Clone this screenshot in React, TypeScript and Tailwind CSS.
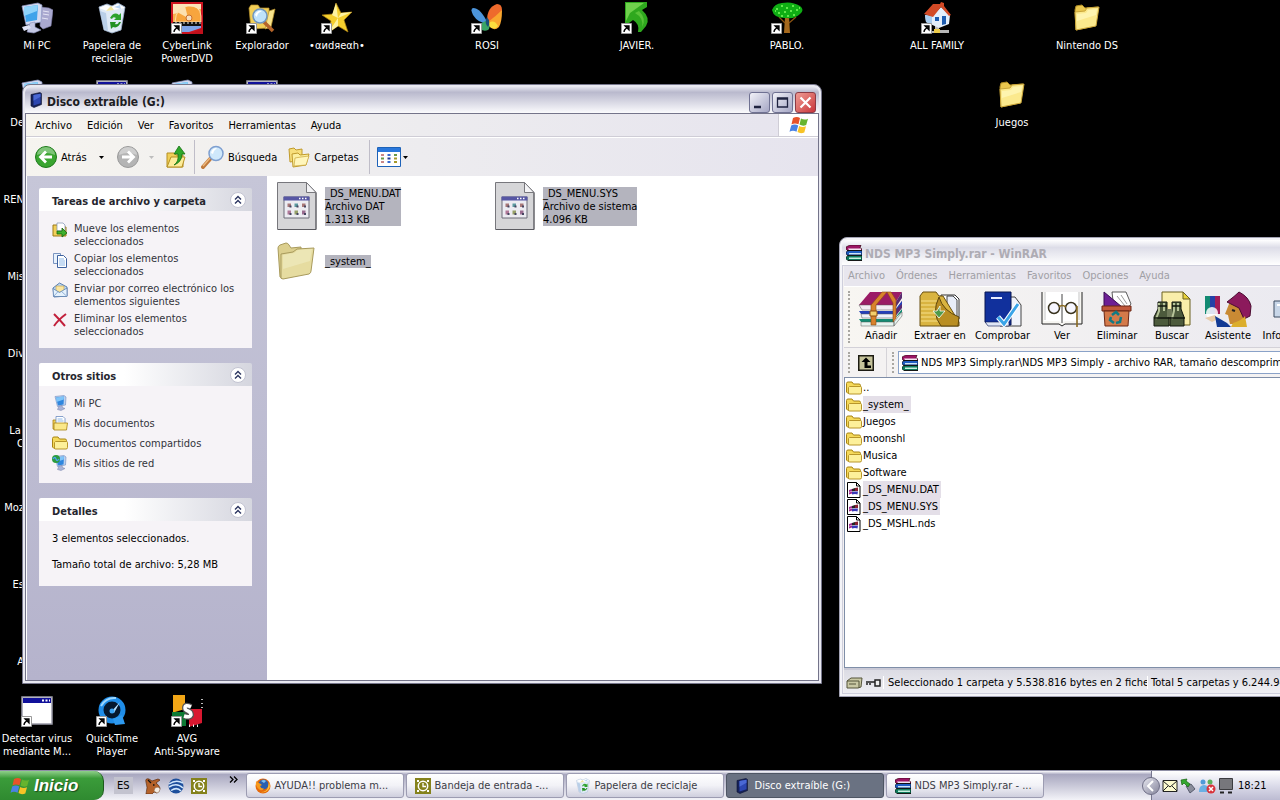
import type { ReactNode } from "react"

type IconProps = { className?: string }

/* ---------- shared icons ---------- */

function Folder({ className = "size-4" }: IconProps) {
  return (
    <svg viewBox="0 0 32 32" className={className}>
      <path d="M4 8 5 4l6-1 3 3 13-1-3 19L5 28z" fill="#e9c64e" stroke="#b08d24" />
      <path d="M4 10l10-1 2-3 12-1-3 19L5 28z" fill="#fbe98d" stroke="#c9a53a" />
      <path d="M6 12l9-1 2-3 9-1-1 6L6 19z" fill="#fff6b8" opacity=".8" />
    </svg>
  )
}

function SmallFolder({ className = "size-4" }: IconProps) {
  return (
    <svg viewBox="0 0 16 16" className={className}>
      <path d="M.500 12V3.500q0-1.500 1.500-1.500H6l1.500 2H13q1.500 0 1.500 1.500V13.500H2z" fill="#f5d95a" stroke="#a88413" />
      <path d="M3.500 6.500h11q1 0 1 1v5q0 1.500-1.500 1.500H3.500q-1 0-1-1V7.500z" fill="#fdf09a" stroke="#b8962a" />
    </svg>
  )
}

function Books({ className = "size-4" }: IconProps) {
  return (
    <svg viewBox="0 0 16 16" className={className}>
      <path d="M0 2 4 0h11l-1 3 2 1v2H2L0 4z" fill="#9b1464" stroke="#200" strokeWidth=".6" />
      <path d="M2 3.500h13v1.500H3z" fill="#f4e3ef" />
      <path d="M0 7l3-1.500h13v5H2L0 9z" fill="#1f5fc4" stroke="#001" strokeWidth=".6" />
      <path d="M3 8h12v1.500H3z" fill="#cfe4f6" />
      <path d="M0 12l3-1.500h13v5H2L0 14z" fill="#0e7a5c" stroke="#010" strokeWidth=".6" />
      <path d="M3 12.500h12V14H3z" fill="#c9f0e0" />
      <path d="M1 5.500h15M1 10.300h15M2 15.500h14" stroke="#111" strokeWidth=".9" />
    </svg>
  )
}

function Drive({ className = "size-4" }: IconProps) {
  return (
    <svg viewBox="0 0 16 16" className={className}>
      <path d="M2 2.500l9-2 1.500 1v11L5 15.500 2 14z" fill="#16225a" stroke="#0b1030" strokeWidth=".6" />
      <path d="M4.500 3l7-1.300v9.500l-7 2.300z" fill="#2c46b0" />
      <path d="M4.500 3l7-1.300v3l-7 4z" fill="#4a68d4" />
    </svg>
  )
}

function Bin({ className = "size-4" }: IconProps) {
  return (
    <svg viewBox="0 0 32 32" className={className}>
      <path d="M3 5l8-3 5 2 6-3 7 4-4 23-9 3-8-3z" fill="#dfeaf6" stroke="#9fb4cf" strokeWidth=".8" />
      <path d="M3 6l8 3 18-3-7-4-7 3-5-2z" fill="#fff" />
      <path d="M10 9l5-5 3 4z" fill="#f2e6a0" />
      <path d="M18 5l6-2 1 4z" fill="#b9d6f5" />
      <path d="M4 9l6 2 2 18-4-2z" fill="#b9cfe8" />
      <path d="M14 16q4-7 9-3l2-2v7h-7l2-2q-3-2-4 1z" fill="#2da32d" />
      <path d="M25 20q-3 7-8 5l-2 2-1-7h6l-1 2q3 1 4-2z" fill="#239123" />
    </svg>
  )
}

function Computer({ className = "size-8" }: IconProps) {
  return (
    <svg viewBox="0 0 32 32" className={className}>
      <path d="M20 5l8 1 4 2-2 16-8 3-3-3z" fill="#a9a8cf" stroke="#7f7eaa" strokeWidth=".6" />
      <path d="M22 9l6 1M22 12l6 1M21 16l6 1" stroke="#e6e6f5" />
      <path d="M1 4l16-3 4 2-1 17-15 3z" fill="#d5daf0" stroke="#8e98c4" strokeWidth=".7" />
      <path d="M3 5l14-2-1 15-11 2z" fill="#3fa3ea" />
      <path d="M3 5l14-2-1 6-13 5z" fill="#8fd3fa" />
      <path d="M9 21l5-1v5l6 3-7 3-7-1z" fill="#c4c8e4" stroke="#8c90b8" strokeWidth=".6" />
      <path d="M1 25l7-2 2 3-7 3z" fill="#dfe2f4" />
    </svg>
  )
}

function XpFlag({ className = "size-5" }: IconProps) {
  return (
    <svg viewBox="0 0 20 20" className={className}>
      <path d="M4 3q4-2 7 0L9.500 9.300q-3.500-1.800-7 0z" fill="#e8532a" />
      <path d="M12 3.500q3.500 2 7 .2l-1.800 6.300q-3.500 1.500-6.700-.4z" fill="#66b42e" />
      <path d="M2.200 10.500q3.600-1.800 7 0L7.500 16.700q-3.500-1.900-7 0z" fill="#4a82e4" />
      <path d="M10.200 10.900q3.200 1.900 6.800.3l-1.700 6.200q-3.600 1.700-6.800-.3z" fill="#f7c326" />
    </svg>
  )
}

function Monitor({ net }: { net?: boolean }) {
  return (
    <svg viewBox="0 0 16 16" className="size-4 shrink-0">
      <path d="M3 1.500l9-1L14 2l-.5 8-8 1.500z" fill="#bcd0ee" stroke="#6e8cc0" strokeWidth=".6" />
      <path d="M4 2.500l8-1-.5 8-5.500 1z" fill="#2f86de" />
      <path d="M4 2.500l8-1-.2 3L4.500 7z" fill="#7fc4f8" />
      <path d="M7 11l3-.5.500 2 2.500 1-4 2-3.500-1z" fill="#aab4d8" stroke="#7480aa" strokeWidth=".5" />
      {net && <circle cx="4" cy="4" r="4" fill="#2c9b3e" />}
      {net && <path d="M1 4q2-3 3 0t3 0" stroke="#4aa4f0" strokeWidth="1.300" fill="none" />}
    </svg>
  )
}

function OutlookClock({ className = "size-4" }: IconProps) {
  return (
    <svg viewBox="0 0 16 16" className={className}>
      <path d="M0 0h16v16H0z" fill="#85821c" />
      <path d="M2 2h2v2H2zM12 2h2v2h-2zM2 12h2v2H2zM12 12h2v2h-2z" fill="#fff" />
      <circle cx="8" cy="8" r="4.700" fill="#85821c" stroke="#fff" strokeWidth="1.500" />
      <path d="M8 5v3.500h3" stroke="#fff" strokeWidth="1.300" fill="none" />
    </svg>
  )
}

function Firefox() {
  return (
    <svg viewBox="0 0 16 16" className="size-4 shrink-0">
      <circle cx="8" cy="8" r="7.500" fill="#e66a0c" />
      <circle cx="8.500" cy="6.500" r="5" fill="#2a5fae" />
      <path d="M6 3q3-2 5 0l-2 2z" fill="#7fc0ee" />
      <path d="M1 3q2 2 4 2.500L7 7 5 8q1 3 4 2.500Q8 13 5 12 0 9 1 3z" fill="#f79a1c" />
      <path d="M14 4q2 5-1 8t-7 2q6 0 7-5z" fill="#fbc53a" />
    </svg>
  )
}

/* ---------- desktop icons ---------- */

function PowerDvd() {
  return (
    <svg viewBox="0 0 32 32" className="size-8">
      <path d="M0 0h32v32H0z" fill="#cc1420" />
      <path d="M2 2h28v18H2z" fill="#f8b04c" />
      <path d="M2 2h28v5L2 12z" fill="#fbe3b8" />
      <path d="M4 20Q5 5 17 4t13 10v6z" fill="#f7a53e" stroke="#fff0d0" strokeWidth=".7" />
      <path d="M17 16L6 10q3-5 8-6z" fill="#fce0b0" />
      <circle cx="18" cy="16" r="3" fill="#f6dfc0" stroke="#c87030" />
      <path d="M2 20h28v4H2z" fill="#111" />
      <path d="M4 21h2M8 21h2M12 21h2M16 21h2M20 21h2M24 21h2M28 21h2" stroke="#eee" />
      <path d="M8 24h22v2l-12 4H8z" fill="#7fa4e8" />
      <path d="M12 32q12 0 20-7v7z" fill="#c0101c" />
    </svg>
  )
}

function Explorer() {
  return (
    <svg viewBox="0 0 32 32" className="size-8">
      <path d="M3 6l2-3 7 0 2 3 9 0v20L5 27z" fill="#f2cf58" stroke="#b8902a" strokeWidth=".7" />
      <path d="M23 9l6-2-4 18-6 2z" fill="#f9e48c" stroke="#b8902a" strokeWidth=".7" />
      <path d="M18 20l9 9" stroke="#b5652a" strokeWidth="3.500" />
      <circle cx="14" cy="14" r="7" fill="#bfe2fa" stroke="#6f94bd" strokeWidth="1.500" />
      <path d="M9 13q2-5 7-4-5 2-5 6z" fill="#fff" />
    </svg>
  )
}

function Star() {
  return (
    <svg viewBox="0 0 32 32" className="size-8">
      <path d="M15 1l5 10 11-1-8 8 4 12-10-6-10 7 3-12-9-6 11-1z" fill="#f4cf2e" stroke="#a77c10" strokeWidth=".7" />
      <path d="M15 1l2 15-6-3zM31 10l-14 6 3-5zM7 31l10-15 0 8z" fill="#fdf3a0" />
    </svg>
  )
}

function Butterfly() {
  return (
    <svg viewBox="0 0 32 32" className="size-8">
      <path d="M16 19Q16 5 26 2q5 0 5 6-1 8-13 13z" fill="#ee6a2c" />
      <path d="M17 20Q25 14 31 8q0 12-3 17-5 5-10-1z" fill="#f9a62e" />
      <path d="M18 21q5-4 9 3-4 5-9 0z" fill="#fbdc3e" />
      <path d="M17 22Q10 6 2 6-1 7 2 13q5 8 15 9z" fill="#4c94da" />
      <path d="M17 18q3 8 0 10-5 2-9-2 0-5 9-8z" fill="#3aa566" />
      <path d="M16 15q4 5 1 10-4-4-1-10z" fill="#174f7a" />
    </svg>
  )
}

function GreenArrow() {
  return (
    <svg viewBox="0 0 32 32" className="size-8">
      <path d="M4 0h22v5l-5 3q9 8 4 16l-5 6h-3q2-8-5-12l-8 6z" fill="#2fa81e" />
      <path d="M5 1h18L9 11l-4 8z" fill="#6fd14c" />
      <path d="M14 11q9 5 7 14 5-8-3-16z" fill="#58c238" />
    </svg>
  )
}

function Tree() {
  return (
    <svg viewBox="0 0 32 32" className="size-8">
      <path d="M14 15h4l1 16h-6z" fill="#a5681c" />
      <path d="M8 15l6 6M25 15l-7 6" stroke="#8a5212" strokeWidth="1.300" />
      <path d="M1 8q2-6 10-7 10-2 18 3 5 4 0 8-5 5-13 4Q3 17 1 8z" fill="#0fae14" />
      <path d="M5 7h2M10 4h2M15 6h2M21 4h2M25 8h2M7 11h2M13 10h2M19 9h2M22 13h2M16 14h2M10 14h2M4 9h1M28 6h1" stroke="#7dfb5e" strokeWidth="1.600" />
    </svg>
  )
}

function House() {
  return (
    <svg viewBox="0 0 32 32" className="size-8">
      <path d="M14 22h4v6h10v3H8v-2h6z" fill="#b8b8b8" />
      <path d="M13 27h6v4h-6z" fill="#ecca4a" />
      <path d="M4 13l7 1 9-9 9 8-1 9-10 4L5 20z" fill="#e3eefb" />
      <path d="M4 13l7 1v9l-6-3z" fill="#a9cdf0" />
      <path d="M3 12L12 2l7 0 1-2 3 1v3l7 9-2 1-8-9-8 10z" fill="#d24a26" />
      <path d="M14 15h4v4h-4z" fill="#1d5cb0" />
      <path d="M21 14h4v8l-4 1z" fill="#1d5cb0" />
    </svg>
  )
}

function AppWindow() {
  return (
    <svg viewBox="0 0 32 32" className="size-8">
      <path d="M1 2h30v27H1z" fill="#fff" stroke="#9a9aa8" strokeWidth="1.500" />
      <path d="M2 3h28v5H2z" fill="#10109a" />
      <path d="M21 5.500h2M24.500 5.500h2M28 5.500h1" stroke="#fff" strokeWidth="2" />
    </svg>
  )
}

function QuickTime() {
  return (
    <svg viewBox="0 0 32 32" className="size-8">
      <circle cx="16" cy="15" r="11" fill="#05182e" stroke="#1f8de8" strokeWidth="5" />
      <path d="M5 11Q10 2 20 3" stroke="#9ad6ff" strokeWidth="2" fill="none" />
      <path d="M17 24l9-4 3 9-10 1z" fill="#2e9af0" />
      <path d="M15 17l9-10-6 11z" fill="#b8e2ff" />
      <circle cx="16" cy="16" r="2.500" fill="#3ba4f4" />
    </svg>
  )
}

function Avg() {
  return (
    <svg viewBox="0 0 32 32" className="size-8">
      <path d="M2 0h12v14l-10 3H2z" fill="#f2a616" />
      <path d="M1 17h14v14H1z" fill="#0d7a34" />
      <path d="M18 14h13v14l-13 4z" fill="#d91830" />
      <path d="M31 4v12" stroke="#bbb" strokeDasharray="1 3" strokeWidth="2" />
      <path d="M18 31h12" stroke="#eee" strokeDasharray="1 3" strokeWidth="3" />
      <path d="M20 12q-6-3-6 1 0 2 3 3t3 4q-1 3-7 1" stroke="#555" strokeWidth="6" fill="none" />
      <path d="M20 12q-6-3-6 1 0 2 3 3t3 4q-1 3-7 1" stroke="#fff" strokeWidth="3.500" fill="none" />
    </svg>
  )
}

const ShortcutArrow = () => (
  <svg viewBox="0 0 11 11" className="absolute bottom-0 left-0 size-[11px]">
    <path d="M.500.500h10v10H.500z" fill="#fff" stroke="#999" />
    <path d="M3 9q0-3 3-4M4 3h4v4z" stroke="#000" strokeWidth="1.300" fill="#000" fillOpacity=".9" />
  </svg>
)

type DesktopItem = { col: number; row: number; label: string; icon: ReactNode; shortcut?: boolean }

const desktopItems: DesktopItem[] = [
  { col: 0, row: 0, label: "Mi PC", icon: <Computer /> },
  { col: 1, row: 0, label: "Papelera de\nreciclaje", icon: <Bin className="size-8" /> },
  { col: 2, row: 0, label: "CyberLink\nPowerDVD", icon: <PowerDvd />, shortcut: true },
  { col: 3, row: 0, label: "Explorador", icon: <Explorer />, shortcut: true },
  { col: 4, row: 0, label: "•αиdяeαh•", icon: <Star />, shortcut: true },
  { col: 6, row: 0, label: "ROSI", icon: <Butterfly />, shortcut: true },
  { col: 8, row: 0, label: "JAVIER.", icon: <GreenArrow />, shortcut: true },
  { col: 10, row: 0, label: "PABLO.", icon: <Tree />, shortcut: true },
  { col: 12, row: 0, label: "ALL FAMILY", icon: <House />, shortcut: true },
  { col: 14, row: 0, label: "Nintendo DS", icon: <Folder className="size-8" /> },
  { col: 13, row: 1, label: "Juegos", icon: <Folder className="size-8" /> },
  { col: 0, row: 1, label: "", icon: <Computer /> },
  { col: 1, row: 1, label: "", icon: <AppWindow /> },
  { col: 2, row: 1, label: "", icon: <Computer /> },
  { col: 3, row: 1, label: "", icon: <AppWindow /> },
  { col: 0, row: 9, label: "Detectar virus\nmediante M...", icon: <AppWindow />, shortcut: true },
  { col: 1, row: 9, label: "QuickTime\nPlayer", icon: <QuickTime />, shortcut: true },
  { col: 2, row: 9, label: "AVG\nAnti-Spyware", icon: <Avg />, shortcut: true },
]

// first column, mostly under the explorer window
const coveredLabels = ["De", "REN", "Mis", "Div", "La \nC", "Moz", "Es", "A"]

function DesktopIcon({ col, row, label, icon, shortcut }: DesktopItem) {
  return (
    <a href="#" className="absolute flex w-[74px] flex-col items-center gap-[5px] text-center text-white" style={{ left: col * 75, top: row * 77 + 2 }}>
      <span className="relative size-8">
        {icon}
        {shortcut && <ShortcutArrow />}
      </span>
      <span className="whitespace-pre">{label}</span>
    </a>
  )
}

/* ---------- explorer window ---------- */

const MoveIcon = () => (
  <svg viewBox="0 0 16 16" className="size-4 shrink-0">
    <path d="M1 3h5l1 2h7v9H1z" fill="#f2d05a" stroke="#9c7a18" />
    <path d="M5 1h6l2 2v6H5z" fill="#fff" stroke="#7d8fb0" strokeWidth=".7" />
    <path d="M5 9h5V6l5 5-5 4v-3H5z" fill="#3db02c" stroke="#14640c" strokeWidth=".8" />
  </svg>
)

const CopyIcon = () => (
  <svg viewBox="0 0 16 16" className="size-4 shrink-0">
    <path d="M1.500 1.500h7v10h-7z" fill="#e8f1fc" stroke="#7a94c0" />
    <path d="M5.500 3.500h6l3 3v9h-9z" fill="#fff" stroke="#3f62a0" />
    <path d="M7 7h5M7 9h6M7 11h6M7 13h6" stroke="#8fb8e8" />
  </svg>
)

const MailIcon = () => (
  <svg viewBox="0 0 16 16" className="size-4 shrink-0">
    <path d="M1 6l6.500-5L15 5v9L2 15z" fill="#bcd8f4" stroke="#5b7fae" />
    <path d="M4 4h8v6H4z" fill="#fbe6a0" stroke="#b89a4a" strokeWidth=".6" />
    <path d="M1 6.500l6.500 4L15 6v8.500H1.500z" fill="#e4f1fd" stroke="#5b7fae" strokeWidth=".8" />
    <path d="M2 14l4.500-5M14.500 14L9 9" stroke="#7fa1cc" strokeWidth=".8" />
  </svg>
)

const DeleteIcon = () => (
  <svg viewBox="0 0 16 16" className="size-4 shrink-0">
    <path d="M2 2q6 6 11 12M14 2Q6 8 2 14" stroke="#c2203c" strokeWidth="2" fill="none" />
  </svg>
)

const DocsIcon = () => (
  <svg viewBox="0 0 16 16" className="size-4 shrink-0">
    <path d="M1 5h4v9H1z" fill="#f2d05a" stroke="#a88413" strokeWidth=".8" />
    <path d="M4 1.500h7l2 2V10H4z" fill="#fff" stroke="#6c8cc0" strokeWidth=".8" />
    <path d="M5.500 4h5M5.500 6h6" stroke="#8fb8e8" />
    <path d="M2 8h13.500l-1 7H2z" fill="#fbe88a" stroke="#a88413" strokeWidth=".8" />
  </svg>
)

function TaskPanel({ title, children }: { title: string; children: ReactNode }) {
  return (
    <section>
      <div className="flex h-[23px] items-center justify-between rounded-t-[2px] bg-linear-to-r from-white from-40% to-[#d5d6df] pr-1.5 pl-[13px]">
        <h2 className="pt-1 font-bold text-[#26262e]">{title}</h2>
        <button aria-label={`Contraer ${title}`} className="flex size-4 items-center justify-center rounded-full border border-[#c3c4d2] bg-white">
          <svg viewBox="0 0 10 10" className="size-2.5">
            <path d="M2 4.500l3-3 3 3M2 8.500l3-3 3 3" stroke="#2b3560" strokeWidth="1.400" fill="none" />
          </svg>
        </button>
      </div>
      <div className="bg-[#f6f3f7]">{children}</div>
    </section>
  )
}

const fileTasks = [
  { icon: <MoveIcon />, text: "Mueve los elementos seleccionados" },
  { icon: <CopyIcon />, text: "Copiar los elementos seleccionados" },
  { icon: <MailIcon />, text: "Enviar por correo electrónico los elementos siguientes" },
  { icon: <DeleteIcon />, text: "Eliminar los elementos seleccionados" },
]

const places = [
  { icon: <Monitor />, text: "Mi PC" },
  { icon: <DocsIcon />, text: "Mis documentos" },
  { icon: <SmallFolder className="size-4 shrink-0" />, text: "Documentos compartidos" },
  { icon: <Monitor net />, text: "Mis sitios de red" },
]

function DataFile() {
  return (
    <svg viewBox="0 0 40 48" className="h-12 w-10">
      <path d="M.500.500h29l9.500 10v37H.500z" fill="#d6d6d8" stroke="#77777c" />
      <path d="M29.500.500v10H39z" fill="#f4f4f6" stroke="#77777c" />
      <path d="M39 11v36.500H1" stroke="#5a5a60" fill="none" />
      <path d="M7 15h25v21H7z" fill="#ececf2" stroke="#6c6c78" />
      <path d="M6.500 14.500h26v4h-26z" fill="#5757a4" />
      <path d="M22 16.500h1.500M25 16.500h1.500M28 16.500h1.500" stroke="#fff" strokeWidth="1.500" />
      <path d="M10.500 21.500h3.500v3.500h-3.500zM25 21.500h3.500v3.500h-3.500z" fill="#a87878" />
      <path d="M17.500 21.500h3.500v3.500h-3.500z" fill="#5c9aa0" />
      <path d="M10.500 28.500h3.500v4h-3.500z" fill="#b07898" />
      <path d="M17.500 28.500h3.500v4h-3.500z" fill="#96a068" />
      <path d="M25 28.500h3.500v4h-3.500z" fill="#9a6c90" />
      <path d="M12.500 23.500h2v2h-2zM19.500 23.500h2v2h-2zM27 23.500h2v2h-2zM12.500 31h2v2h-2zM19.500 31h2v2h-2zM27 31h2v2h-2z" fill="#454560" />
    </svg>
  )
}

function BigFolder() {
  return (
    <svg viewBox="0 0 40 40" className="size-10">
      <path d="M1 7q0-2 2-3l6-2q2 0 3 2l2 3 10-1v22L5 37l-2-1z" fill="#dccf8e" stroke="#a89a5c" />
      <path d="M4 13l12-2 4-3 17-1-3 23q0 2-2 3L6 38q-3 0-2-3z" fill="#e6dca0" stroke="#a89a5c" />
      <path d="M6 14l11-2 4-3 14-1-2 12L6 28z" fill="#eee9bd" opacity=".7" />
    </svg>
  )
}

const files = [
  { icon: <DataFile />, lines: ["_DS_MENU.DAT", "Archivo DAT", "1.313 KB"] },
  { icon: <DataFile />, lines: ["_DS_MENU.SYS", "Archivo de sistema", "4.096 KB"] },
  { icon: <BigFolder />, lines: ["_system_"] },
]

const Caret = ({ className = "fill-black" }: IconProps) => (
  <svg viewBox="0 0 7 4" className={`h-[3px] w-[5px] ${className}`}>
    <path d="M0 0h7L3.500 4z" />
  </svg>
)

function RoundArrow({ back }: { back?: boolean }) {
  return (
    <svg viewBox="0 0 24 24" className="size-6">
      <circle cx="12" cy="12" r="10.500" fill={back ? "#3aa530" : "#b4b4b4"} stroke={back ? "#1d7a1a" : "#9a9a9a"} />
      <path d="M3 10a9 8 0 0 1 18 0q-9-4-18 0z" fill="#fff" opacity=".35" />
      <path d={back ? "M18 12H7M12 6.500L6.500 12l5.500 5.500" : "M6 12h11M12 6.500l5.500 5.500-5.500 5.500"} stroke="#fff" strokeWidth="2.800" fill="none" />
    </svg>
  )
}

function ExplorerToolbar() {
  return (
    <div className="flex h-[39px] shrink-0 items-center border-t border-white bg-linear-to-r from-[#f6f4ef] via-[#edecef] to-[#e6e4ee] pl-2">
      <button className="flex w-[70px] items-center gap-[3px]">
        <RoundArrow back />
        Atrás
        <Caret className="ml-auto fill-black" />
      </button>
      <button aria-label="Adelante" className="ml-3 flex w-[38px] items-center justify-between">
        <RoundArrow />
        <Caret className="fill-[#bdbdbd]" />
      </button>
      <button aria-label="Arriba" className="ml-3">
        <svg viewBox="0 0 22 24" className="h-6 w-[22px]">
          <path d="M1 8h7l2 2h7v12H1z" fill="#f0cf58" stroke="#b58f22" />
          <path d="M1 22l4-10h14l-3 10z" fill="#fcec9a" stroke="#b58f22" />
          <path d="M8 20q5-3 4-11H8l5-8 6 8h-3q0 8-8 11z" fill="#2fa82a" stroke="#13700f" strokeWidth=".8" />
        </svg>
      </button>
      <span className="ml-1.5 h-[34px] w-px bg-[#bfbdc8]" />
      <button className="ml-1.5 flex items-center gap-[3px]">
        <svg viewBox="0 0 24 24" className="size-6">
          <path d="M2 22l8-9" stroke="#c07a3c" strokeWidth="4" strokeLinecap="round" />
          <path d="M2 21l7-8" stroke="#eebb80" strokeWidth="1.300" />
          <circle cx="15" cy="8.500" r="7" fill="#cfe8fb" stroke="#7e9fd0" strokeWidth="1.500" />
          <path d="M10 8q1-5 6-5-3 2-4 6z" fill="#fff" />
        </svg>
        Búsqueda
      </button>
      <button className="ml-2.5 flex items-center gap-[3px]">
        <svg viewBox="0 0 24 24" className="size-6">
          <path d="M2 4l5-1 2 2 6-1v11L3 17z" fill="#f7df7c" stroke="#c09a2c" />
          <path d="M5 9l6-1 2 2 9-1-3 11-13 2z" fill="#fcf0a0" stroke="#c09a2c" />
          <path d="M8 13l6-1 8-1-3 9-12 1z" fill="#fff6bc" stroke="#c9a53a" strokeWidth=".7" />
        </svg>
        Carpetas
      </button>
      <span className="ml-2.5 h-[34px] w-px bg-[#bfbdc8]" />
      <button aria-label="Vistas" className="ml-[7px] flex items-center gap-0.5">
        <svg viewBox="0 0 24 20" className="h-5 w-6">
          <path d="M.500.500h23v19H.500z" fill="#fff" stroke="#1d62b8" />
          <path d="M1 1h22v4H1z" fill="#2a78dc" />
          <path d="M4 7h3v2H4zM4 14h3v2H4z" fill="#c88" />
          <path d="M4 10.500h3v2H4zM17 7h3v2h-3z" fill="#6a9a4a" />
          <path d="M10.500 7h3v2h-3zM10.500 14h3v2h-3z" fill="#3a6ad0" />
          <path d="M10.500 10.500h3v2h-3z" fill="#223a90" />
          <path d="M17 10.500h3v2h-3zM17 14h3v2h-3z" fill="#a89a2a" />
        </svg>
        <Caret />
      </button>
    </div>
  )
}

function ExplorerWindow() {
  return (
    <div className="absolute top-[84px] left-[22px] flex h-[600px] w-[800px] flex-col rounded-t-lg border border-[#77778c] bg-[#e9e9f1] p-0.5">
      <div className="flex h-[26px] shrink-0 items-center rounded-t-md bg-linear-to-b from-[#e4e4ee] via-[#b9b9cd] via-20% to-[#fbfbfd] pr-[3px] pl-1">
        <Drive className="size-4" />
        <h1 className="ml-0.5 grow pt-1 text-[12px] font-bold text-[#1c1c22]">Disco extraíble (G:)</h1>
        <div className="flex gap-0.5 pt-1">
          <button aria-label="Minimizar" className="size-[21px] rounded-[3px] border border-[#6f7192] bg-linear-to-br from-[#f2f2f8] to-[#a5a6c4]">
            <svg viewBox="0 0 19 19"><path d="M4 14h7" stroke="#1f2340" strokeWidth="2.500" /></svg>
          </button>
          <button aria-label="Maximizar" className="size-[21px] rounded-[3px] border border-[#6f7192] bg-linear-to-br from-[#f2f2f8] to-[#a5a6c4]">
            <svg viewBox="0 0 19 19"><path d="M4.500 5h10v9h-10zM4.500 6h10" stroke="#1f2340" strokeWidth="1.300" fill="none" /></svg>
          </button>
          <button aria-label="Cerrar" className="size-[21px] rounded-[3px] border border-[#8c3a44] bg-linear-to-br from-[#ee9a94] to-[#c8323c]">
            <svg viewBox="0 0 19 19"><path d="M4.500 4.500l10 10M14.500 4.500l-10 10" stroke="#fff" strokeWidth="2.200" /></svg>
          </button>
        </div>
      </div>
      <div className="flex min-h-0 grow flex-col border border-[#74748a] bg-white">
        <div className="flex h-[23px] shrink-0 items-stretch border-b border-[#cfcdd6] bg-linear-to-r from-[#f6f4ef] via-[#edecef] to-[#e6e4ee]">
          <nav className="flex grow items-center gap-[15px] pl-[9px]">
            {["Archivo", "Edición", "Ver", "Favoritos", "Herramientas", "Ayuda"].map((m) => <button key={m}>{m}</button>)}
          </nav>
          <div className="flex w-10 items-center justify-center border-l border-[#cfcdd6] bg-white">
            <XpFlag />
          </div>
        </div>
        <ExplorerToolbar />
        <div className="flex min-h-0 grow pl-px">
          <aside className="flex w-60 shrink-0 flex-col gap-[15px] bg-linear-to-b from-[#c6c6d8] to-[#b5b3cc] pt-3 pr-[15px] pl-3 text-[#33333b]">
            <TaskPanel title="Tareas de archivo y carpeta">
              <ul className="flex flex-col gap-1 pt-[11px] pr-2 pb-2.5 pl-[13px]">
                {fileTasks.map((task) => (
                  <li key={task.text}>
                    <a href="#" className="flex gap-1.5">
                      {task.icon}
                      <span>{task.text}</span>
                    </a>
                  </li>
                ))}
              </ul>
            </TaskPanel>
            <TaskPanel title="Otros sitios">
              <ul className="flex flex-col gap-1 pt-[9px] pb-3 pl-[13px]">
                {places.map((place) => (
                  <li key={place.text}>
                    <a href="#" className="flex items-center gap-1.5">
                      {place.icon}
                      <span>{place.text}</span>
                    </a>
                  </li>
                ))}
              </ul>
            </TaskPanel>
            <TaskPanel title="Detalles">
              <div className="flex flex-col gap-[13px] pt-[11px] pb-[15px] pl-[13px] text-black">
                <p>3 elementos seleccionados.</p>
                <p>Tamaño total de archivo: 5,28 MB</p>
              </div>
            </TaskPanel>
          </aside>
          <main className="flex grow flex-wrap content-start gap-y-[7px] pt-1.5 pl-2.5">
            {files.map((file) => (
              <div key={file.lines[0]} className="flex h-12 w-[218px] items-center">
                <div className="w-12">{file.icon}</div>
                <div className="bg-[#b4b4be]">
                  {file.lines.map((line) => <p key={line}>{line}</p>)}
                </div>
              </div>
            ))}
          </main>
        </div>
      </div>
    </div>
  )
}

/* ---------- WinRAR window ---------- */

const AddIcon = () => (
  <svg viewBox="0 0 46 36" className="h-9 w-[46px]">
    <path d="M1 14L12 1h32l-8 13z" fill="#9b1b66" />
    <path d="M36 14l8-13v6l-8 12zM36 21l8-11v7l-8 10z" fill="#5a2b70" />
    <path d="M1 14h35v5H4z" fill="#f3ecf4" stroke="#555" strokeWidth=".5" />
    <path d="M1 20h35v3H3zM36 20l8-10v3z" fill="#2440b8" />
    <path d="M3 23h33v4H4z" fill="#eef2fb" stroke="#555" strokeWidth=".5" />
    <path d="M1 28h35v3H3zM36 28l8-10v3z" fill="#138a72" />
    <path d="M3 31h33v4H3zM36 35l8-10v-4l-8 10z" fill="#e6f4f0" stroke="#555" strokeWidth=".5" />
    <path d="M13 14L24 1h5L18 14v20h-5zM33 1l5 8v18l-3 4V12l-6-11z" fill="#d9822c" stroke="#8c4a10" strokeWidth=".6" />
    <path d="M12 20h7v5h-7z" fill="#f3cf6c" stroke="#8c4a10" />
  </svg>
)

const ExtractIcon = () => (
  <svg viewBox="0 0 42 36" className="h-9 w-[42px]">
    <path d="M22 4h14l4 4v20H22z" fill="#fff" stroke="#333" />
    <path d="M28 5h6l4 4v20H28z" fill="#e8edf8" stroke="#444" />
    <path d="M1 35V5l3-4h13l3 4h4l16 26v4z" fill="#d9b440" stroke="#6a5010" />
    <path d="M2 10h18M2 14h17M2 18h14M2 22h14M2 26h16M2 30h20" stroke="#f6e08a" />
    <path d="M20 6q4 14 20 20l-1 9H22Q12 22 20 6z" fill="#b98e22" stroke="#5e460c" />
    <path d="M21 15v5h5l-6 7-6-7h4z" fill="#4f9a4a" stroke="#fff" strokeWidth=".8" />
  </svg>
)

const TestIcon = () => (
  <svg viewBox="0 0 38 36" className="h-9 w-[38px]">
    <path d="M24 6h7l6 8v21H16z" fill="#f0f3fb" stroke="#444" />
    <path d="M1 1h26v33H4l-3-3z" fill="#11309c" stroke="#081650" />
    <path d="M1 31h24v4H4z" fill="#dfe6f5" stroke="#081650" strokeWidth=".6" />
    <path d="M7 7h11" stroke="#e8ecff" strokeWidth="2" />
    <path d="M14 26l6 7 14-20" stroke="#fff" strokeWidth="5" fill="none" />
    <path d="M14 26l6 7 14-20" stroke="#3aa4e8" strokeWidth="3" fill="none" />
  </svg>
)

const ViewIcon = () => (
  <svg viewBox="0 0 44 36" className="h-9 w-11">
    <path d="M2 1v32h17l3 2 3-2h17V1" fill="#f7f6f2" stroke="#222" />
    <path d="M4 1v29h15l3 2 3-2h15V1z" fill="#fff" />
    <path d="M5 1v28M39 1v28" stroke="#aaa" strokeWidth=".7" />
    <path d="M22 3v29" stroke="#444" />
    <circle cx="14" cy="17" r="5.500" fill="#f6f6ff" stroke="#3a3420" strokeWidth="1.500" />
    <circle cx="31" cy="17" r="5.500" fill="#f6f6ff" stroke="#3a3420" strokeWidth="1.500" />
    <path d="M19 16q3-3 7 0M37 15v21" stroke="#8a6a20" strokeWidth="1.600" fill="none" />
  </svg>
)

const TrashIcon = () => (
  <svg viewBox="0 0 34 36" className="h-9 w-[34px]">
    <path d="M12 1h14l5 12-4 5H14z" fill="#fff" stroke="#333" strokeWidth=".8" />
    <path d="M17 5l8 10M21 4l6 9" stroke="#999" />
    <path d="M4 1l18 15H4z" fill="#6d1f94" stroke="#3a0a55" />
    <path d="M2 15h29v5H2z" fill="#c0583a" stroke="#6a2614" />
    <path d="M4 20h25l-1 15H5z" fill="#d47a4a" stroke="#6a2614" />
    <path d="M12 24l4-3 3 3M21 26l-1 5-4 1M14 32l-4-3 1-3" stroke="#127a84" strokeWidth="2.500" fill="none" />
  </svg>
)

const FindIcon = () => (
  <svg viewBox="0 0 38 36" className="h-9 w-[38px]">
    <path d="M9 1h21l7 7v26H9z" fill="#f9eeaa" stroke="#6b6020" />
    <path d="M30 1v7h7z" fill="#e8d23a" stroke="#6b6020" />
    <path d="M5 11h9v7l2 8v9H1v-9l4-8zM19 11h9v7l3 8v9H17v-9l2-8z" fill="#4c5a3c" stroke="#11160c" />
    <path d="M14 18h5v8h-5z" fill="#6f7a5a" />
    <path d="M6 12v8l-3 8M21 12v8l-2 8M11 12v8M25 12v8" stroke="#b7c49a" strokeWidth="2" fill="none" />
    <path d="M1 27h16M17 27h15M5 15h9M19 15h9" stroke="#11160c" strokeWidth="1.500" />
  </svg>
)

const WizardIcon = () => (
  <svg viewBox="0 0 50 36" className="h-9 w-[50px]">
    <path d="M2 5h5v18H2z" fill="#138a72" />
    <path d="M7 5h5v18H7z" fill="#2440a8" />
    <path d="M12 5h5v18h-5z" fill="#a01c58" />
    <circle cx="9" cy="22" r="6" fill="#fff" opacity=".85" />
    <path d="M26 13l14-3 3 13-5 10H27l-2-9-3-1z" fill="#c98a34" />
    <path d="M29 19l3 1" stroke="#222" strokeWidth="2" />
    <path d="M24 11q8-6 12-10 10 5 12 14l-1 10-6 3-5-11z" fill="#8c1a5c" stroke="#4a0a30" />
    <path d="M2 27l10-3 3 4-6 3z" fill="#e8cba8" />
    <path d="M12 25l12 7 4 4H14z" fill="#123a94" />
    <path d="M30 32q8-2 12-7l2 11H28z" fill="#dcae2c" />
  </svg>
)

const InfoIcon = () => (
  <svg viewBox="0 0 38 36" className="h-9 w-[38px]">
    <path d="M8 1h20v34H8z" fill="#f4f6fb" stroke="#444" />
    <path d="M1 10h36v16H1z" fill="#c8d6e8" stroke="#3a4a60" />
    <path d="M4 14h28" stroke="#fff" strokeWidth="2" />
  </svg>
)

const rarTools = [
  { label: "Añadir", icon: <AddIcon />, width: "w-[58px]" },
  { label: "Extraer en", icon: <ExtractIcon />, width: "w-[60px]" },
  { label: "Comprobar", icon: <TestIcon />, width: "w-[65px]" },
  { label: "Ver", icon: <ViewIcon />, width: "w-[54px]" },
  { label: "Eliminar", icon: <TrashIcon />, width: "w-[56px]" },
  { label: "Buscar", icon: <FindIcon />, width: "w-[54px]" },
  { label: "Asistente", icon: <WizardIcon />, width: "w-[58px]" },
  { label: "Información", icon: <InfoIcon />, width: "w-[70px]" },
]

const rarRows = [
  { name: "..", folder: true },
  { name: "_system_", folder: true, selected: true },
  { name: "Juegos", folder: true },
  { name: "moonshl", folder: true },
  { name: "Musica", folder: true },
  { name: "Software", folder: true },
  { name: "_DS_MENU.DAT", selected: true },
  { name: "_DS_MENU.SYS", selected: true },
  { name: "_DS_MSHL.nds" },
]

const FileIcon = () => (
  <svg viewBox="0 0 16 16" className="size-4">
    <path d="M1.500.500h9l3.500 3.500v11.500H1.500z" fill="#fff" stroke="#000" />
    <path d="M10.500.500V4H14" fill="none" stroke="#000" />
    <path d="M3 8l3-1v2l-3 1zM3 10.500l3-1v2l-3 1z" fill="#a02890" />
    <path d="M6 7l3-1v3L6 9.500z" fill="#222" />
    <path d="M9 6l3-.5v3.500L9 9z" fill="#8a2030" />
    <path d="M6 10l3-.5V12l-3 .5zM9 9.500h3l-.5 3L9 12z" fill="#3838b8" />
  </svg>
)

const Grip = () => <span className="my-1 w-[3px] shrink-0 border-l-2 border-dotted border-[#a9a7a2]" />

function WinRarWindow() {
  return (
    <div className="absolute top-[237px] -right-20 left-[839px] flex h-[460px] flex-col rounded-tl-lg border border-[#a3a3b4] bg-[#f4f4f8] p-0.5">
      <div className="flex h-[25px] shrink-0 items-center rounded-tl-md bg-linear-to-b from-white via-[#dddde8] via-30% to-white pl-1">
        <Books className="size-4" />
        <h1 className="ml-[3px] pt-1 text-[12px] font-bold text-[#aeacb4]">NDS MP3 Simply.rar - WinRAR</h1>
      </div>
      <div className="flex min-h-0 grow flex-col border border-[#cfcfdc] bg-[#f3f1f2] pl-px">
        <nav className="flex h-5 shrink-0 items-center gap-[11px] bg-[#e8e6ee] pb-0.5 pl-1 text-[#a09fa5]">
          {["Archivo", "Órdenes", "Herramientas", "Favoritos", "Opciones", "Ayuda"].map((m) => <button key={m}>{m}</button>)}
        </nav>
        <div className="flex h-[62px] shrink-0 border-y border-t-white border-b-[#d3d1d8] bg-linear-to-r from-[#f8f6f2] to-[#e9e8f0] pl-1">
          <Grip />
          <div className="flex pt-1 pl-px">
            {rarTools.map((tool) => (
              <button key={tool.label} className={`flex shrink-0 flex-col items-center gap-0.5 ${tool.width}`}>
                {tool.icon}
                <span className="whitespace-nowrap">{tool.label}</span>
              </button>
            ))}
          </div>
        </div>
        <div className="flex h-[29px] shrink-0 bg-[#f4f2f2] pl-1">
          <Grip />
          <button aria-label="Subir un nivel" className="flex w-9 items-center border-r border-[#d5d3d8] pl-[7px]">
            <svg viewBox="0 0 16 16" className="size-4">
              <path d="M0 0h16v16H0z" fill="#1c1b12" />
              <path d="M1.500 1.500h13v13h-13z" fill="#c5c39a" />
              <path d="M8 2.500l4.500 4.500H9.500v3.500H13v2.500H6.500V7H3.500z" fill="#000" />
            </svg>
          </button>
          <span className="w-[5px]" />
          <Grip />
          <label className="my-[3px] ml-[3px] flex grow items-center gap-[3px] border border-[#8aa2c8] bg-white pl-[3px]">
            <Books className="size-4 shrink-0" />
            <input aria-label="Ruta" readOnly className="grow bg-transparent outline-none" value="NDS MP3 Simply.rar\NDS MP3 Simply - archivo RAR, tamaño descomprimido" />
          </label>
        </div>
        <ul className="flex grow flex-col border border-[#7f8ea8] bg-white pt-px pl-px">
          {rarRows.map((row) => (
            <li key={row.name} className="flex h-[17px] items-center">
              {row.folder ? <SmallFolder className="size-4" /> : <FileIcon />}
              <span className={row.selected ? "ml-px bg-[#e4dfe8] py-0.5 pr-0.5" : "ml-px py-0.5"}>{row.name}</span>
            </li>
          ))}
        </ul>
        <footer className="flex h-[25px] shrink-0 items-center border-t-2 border-[#c9c9d6] bg-linear-to-b from-[#dcdce4] to-[#eeeef2] pt-0.5 pl-0.5">
          <svg viewBox="0 0 36 16" className="h-4 w-9">
            <path d="M1 6l4-3h11l-1 9-3 1H1z" fill="#c9c8a4" stroke="#55543a" />
            <path d="M1 6h12v7M3 9h7" stroke="#55543a" fill="none" />
            <path d="M20 7h9M21 8v2M24 8v2" stroke="#222" strokeWidth="1.500" />
            <path d="M29 5h5v6h-5z" fill="#eee" stroke="#222" strokeWidth="1.500" />
          </svg>
          <p className="ml-px w-[264px] overflow-hidden border-l border-white pl-1 whitespace-nowrap">Seleccionado 1 carpeta y 5.538.816 bytes en 2 ficheros</p>
          <p className="border-l border-white pl-[3px] whitespace-nowrap">Total 5 carpetas y 6.244.940 bytes</p>
        </footer>
      </div>
    </div>
  )
}

/* ---------- taskbar ---------- */

const tasks = [
  { text: "AYUDA!! problema m...", icon: <Firefox /> },
  { text: "Bandeja de entrada -...", icon: <OutlookClock className="size-4 shrink-0" /> },
  { text: "Papelera de reciclaje", icon: <Bin className="size-4 shrink-0" /> },
  { text: "Disco extraíble (G:)", icon: <Drive className="size-4 shrink-0" />, active: true },
  { text: "NDS MP3 Simply.rar - ...", icon: <Books className="size-4 shrink-0" /> },
]

function Taskbar() {
  return (
    <footer className="flex h-[30px] shrink-0 border-t border-[#8f8fa6] bg-linear-to-b from-[#fbfbfd] via-[#a9a8c0] via-12% to-[#f3f3f8]">
      <button className="flex w-[104px] items-center gap-1 rounded-r-[10px] border-r border-[#1c5a1c] bg-linear-to-b from-[#8fd08a] via-[#3b9c3a] via-25% to-[#2f8a30] pl-2.5 font-['Liberation_Sans',Arial,sans-serif] text-[17px] font-bold text-white italic text-shadow-[1px_1px_1px_#1c4a1c]">
        <XpFlag />
        Inicio
      </button>
      <button className="my-1.5 ml-2.5 bg-[#c3c3cf] px-[3px]">ES</button>
      <div className="ml-3 flex items-center gap-[7px]">
        <a href="#" aria-label="eMule">
          <svg viewBox="0 0 16 16" className="size-4">
            <path d="M1 4Q0 0 4 1l3 2 6-2 2 1-4 3q3 2 4 5 0 4-3 5l-3-1-2 2H1Q3 9 1 4z" fill="#b5622a" stroke="#5c2a0c" strokeWidth=".7" />
            <path d="M10 10q4-2 5 1 0 3-3 4l-3-2z" fill="#f4ece4" stroke="#8a6a50" strokeWidth=".5" />
            <path d="M3 2l3 3M8 7h1.500" stroke="#111" strokeWidth="1.300" />
          </svg>
        </a>
        <a href="#" aria-label="Google Earth">
          <svg viewBox="0 0 16 16" className="size-4">
            <circle cx="8" cy="8" r="7.500" fill="#1e4f9c" />
            <path d="M1 6q7-5 14-1M1 9q8-5 14 1M3 12.500q6-4 10 .5" stroke="#cfe6fa" strokeWidth="1.500" fill="none" />
          </svg>
        </a>
        <a href="#" aria-label="Outlook"><OutlookClock /></a>
      </div>
      <button aria-label="Más" className="ml-[22px] h-4">
        <svg viewBox="0 0 9 7" className="h-[7px] w-[9px]">
          <path d="M1 .500l3 3-3 3M5 .500l3 3-3 3" stroke="#000" strokeWidth="1.300" fill="none" />
        </svg>
      </button>
      <div className="ml-2 flex min-w-0 grow gap-0.5 pt-0.5 pb-0.5">
        {tasks.map((task) => (
          <button
            key={task.text}
            className={task.active
              ? "flex w-[158px] items-center gap-1 rounded-[3px] border border-[#4e5664] bg-[#6a7282] pl-2 text-white"
              : "flex w-[158px] items-center gap-1 rounded-[3px] border border-[#9c9cb2] bg-linear-to-b from-white via-[#f2f2f7] to-[#cfcfde] pl-2 text-[#3c3c46]"}
          >
            {task.icon}
            <span className="whitespace-nowrap">{task.text}</span>
          </button>
        ))}
      </div>
      <div className="relative flex w-[129px] shrink-0 items-center gap-0.5 border-l border-[#77778f] bg-linear-to-b from-white via-[#dcdcea] via-50% to-[#bcbbd2] pl-2.5">
        <button aria-label="Mostrar iconos ocultos" className="absolute top-1.5 -left-2.5 size-[18px] rounded-full border border-[#6e6e86] bg-linear-to-br from-[#e8e8f0] to-[#85859c]">
          <svg viewBox="0 0 16 16"><path d="M10 3L5 8l5 5" stroke="#fff" strokeWidth="2" fill="none" /></svg>
        </button>
        <svg viewBox="0 0 16 16" className="size-4">
          <path d="M1 2.500h14v11H1z" fill="#fdfbd0" stroke="#222" />
          <path d="M1 3l7 6 7-6M1 13l5-5M15 13l-5-5" stroke="#222" fill="none" />
        </svg>
        <svg viewBox="0 0 16 16" className="size-4">
          <path d="M6 8l5-2 4 5-5 4z" fill="#8a8d9c" stroke="#44475a" strokeWidth=".8" />
          <path d="M1 2l6-1-1 2 4 3-2 3-4-4-2 2z" fill="#33a830" stroke="#14640c" strokeWidth=".7" />
        </svg>
        <svg viewBox="0 0 18 16" className="h-4 w-[18px]">
          <circle cx="5" cy="4" r="2.500" fill="#4f9ad8" />
          <path d="M1 14q0-7 5-7t5 7z" fill="#6ab0e4" />
          <circle cx="12" cy="4" r="2.500" fill="#5cb05c" />
          <circle cx="13" cy="11" r="4.500" fill="#d8343c" />
          <path d="M11 9l4 4M15 9l-4 4" stroke="#fff" strokeWidth="1.500" />
        </svg>
        <svg viewBox="0 0 16 16" className="size-4">
          <path d="M1.500.500h13v11h-13z" fill="#77777c" stroke="#3c3c40" />
          <path d="M2 14.500h4M10 14.500h4" stroke="#222" strokeWidth="2" />
        </svg>
        <time className="ml-0.5">18:21</time>
      </div>
    </footer>
  )
}

export default function App() {
  return (
    <div className="flex h-screen flex-col overflow-hidden bg-black font-['DejaVu_Sans_Condensed','DejaVu_Sans',sans-serif] text-[11px] leading-[13px] text-black">
      <div className="relative grow overflow-hidden">
        {desktopItems.map((item) => <DesktopIcon key={`${item.col}-${item.row}`} {...item} />)}
        <ul className="absolute top-[116px] left-0 flex w-6 flex-col gap-16 text-right whitespace-pre text-white">
          {coveredLabels.map((label) => <li key={label} className="h-[13px]">{label}</li>)}
        </ul>
        <ExplorerWindow />
        <WinRarWindow />
      </div>
      <Taskbar />
    </div>
  )
}
